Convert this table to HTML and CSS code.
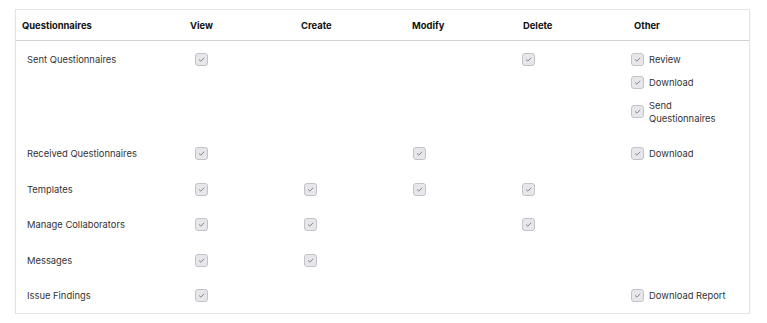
FILE: index.html
```html
<!DOCTYPE html>
<html>
<head>
<meta charset="utf-8">
<link rel="stylesheet" href="styles.css">
</head>
<body>
<div class="card">
  <div class="head">
    <div>Questionnaires</div><div>View</div><div>Create</div><div>Modify</div><div>Delete</div><div>Other</div>
  </div>
  <div class="row">
    <div class="name">Sent Questionnaires</div>
    <div><span class="cb"><svg viewBox="0 0 12 12"><path d="M3.6 6.2 L5.3 7.8 L8.6 4.4"/></svg></span></div>
    <div></div><div></div>
    <div><span class="cb"><svg viewBox="0 0 12 12"><path d="M3.6 6.2 L5.3 7.8 L8.6 4.4"/></svg></span></div>
    <div class="other">
      <div class="opt"><span class="cb"><svg viewBox="0 0 12 12"><path d="M3.6 6.2 L5.3 7.8 L8.6 4.4"/></svg></span><span>Review</span></div>
      <div class="opt"><span class="cb"><svg viewBox="0 0 12 12"><path d="M3.6 6.2 L5.3 7.8 L8.6 4.4"/></svg></span><span>Download</span></div>
      <div class="opt"><span class="cb"><svg viewBox="0 0 12 12"><path d="M3.6 6.2 L5.3 7.8 L8.6 4.4"/></svg></span><span>Send<br>Questionnaires</span></div>
    </div>
  </div>
  <div class="row">
    <div class="name">Received Questionnaires</div>
    <div><span class="cb"><svg viewBox="0 0 12 12"><path d="M3.6 6.2 L5.3 7.8 L8.6 4.4"/></svg></span></div>
    <div></div>
    <div><span class="cb"><svg viewBox="0 0 12 12"><path d="M3.6 6.2 L5.3 7.8 L8.6 4.4"/></svg></span></div>
    <div></div>
    <div class="other">
      <div class="opt"><span class="cb"><svg viewBox="0 0 12 12"><path d="M3.6 6.2 L5.3 7.8 L8.6 4.4"/></svg></span><span>Download</span></div>
    </div>
  </div>
  <div class="row">
    <div class="name">Templates</div>
    <div><span class="cb"><svg viewBox="0 0 12 12"><path d="M3.6 6.2 L5.3 7.8 L8.6 4.4"/></svg></span></div>
    <div><span class="cb"><svg viewBox="0 0 12 12"><path d="M3.6 6.2 L5.3 7.8 L8.6 4.4"/></svg></span></div>
    <div><span class="cb"><svg viewBox="0 0 12 12"><path d="M3.6 6.2 L5.3 7.8 L8.6 4.4"/></svg></span></div>
    <div><span class="cb"><svg viewBox="0 0 12 12"><path d="M3.6 6.2 L5.3 7.8 L8.6 4.4"/></svg></span></div>
    <div></div>
  </div>
  <div class="row">
    <div class="name">Manage Collaborators</div>
    <div><span class="cb"><svg viewBox="0 0 12 12"><path d="M3.6 6.2 L5.3 7.8 L8.6 4.4"/></svg></span></div>
    <div><span class="cb"><svg viewBox="0 0 12 12"><path d="M3.6 6.2 L5.3 7.8 L8.6 4.4"/></svg></span></div>
    <div></div>
    <div><span class="cb"><svg viewBox="0 0 12 12"><path d="M3.6 6.2 L5.3 7.8 L8.6 4.4"/></svg></span></div>
    <div></div>
  </div>
  <div class="row">
    <div class="name">Messages</div>
    <div><span class="cb"><svg viewBox="0 0 12 12"><path d="M3.6 6.2 L5.3 7.8 L8.6 4.4"/></svg></span></div>
    <div><span class="cb"><svg viewBox="0 0 12 12"><path d="M3.6 6.2 L5.3 7.8 L8.6 4.4"/></svg></span></div>
    <div></div><div></div><div></div>
  </div>
  <div class="row">
    <div class="name">Issue Findings</div>
    <div><span class="cb"><svg viewBox="0 0 12 12"><path d="M3.6 6.2 L5.3 7.8 L8.6 4.4"/></svg></span></div>
    <div></div><div></div><div></div>
    <div class="other">
      <div class="opt"><span class="cb"><svg viewBox="0 0 12 12"><path d="M3.6 6.2 L5.3 7.8 L8.6 4.4"/></svg></span><span>Download Report</span></div>
    </div>
  </div>
</div>
</body>
</html>
```
FILE: styles.css
```css
html, body { margin: 0; background: #fff; }
body {
  padding: 9px 17px 0 15px;
  font-family: Inter, "Noto Sans", sans-serif;
  font-size: 9.4px;
  color: #333;
}
.card {
  border: 1px solid #e3e3e6;
  background: #fff;
  box-shadow: 0 2px 3px rgba(0,0,0,0.03);
}
.head {
  display: grid;
  grid-template-columns: 168px 111px 111px 111px 111px 1fr;
  padding-left: 6px;
  height: 30px;
  align-items: center;
  border-bottom: 1px solid #d2d2d6;
  font-weight: 700;
  color: #111;
}
.row {
  display: grid;
  grid-template-columns: 168px 109px 109px 109px 109px 1fr;
  padding: 11.5px 0 11px 11px;
  line-height: 13px;
  align-items: start;
}
.row > div { min-height: 13px; display: flex; align-items: center; }
.other { flex-direction: column; align-items: flex-start !important; gap: 10px; }
.opt { display: flex; align-items: center; gap: 5px; }
.cb {
  display: inline-flex;
  align-items: center;
  justify-content: center;
  width: 13px;
  height: 13px;
  box-sizing: border-box;
  border: 1px solid #c2c2c8;
  border-radius: 3px;
  background: #e6e6eb;
  flex: none;
}
.cb svg { width: 11px; height: 11px; }
.cb path { fill: none; stroke: #7c7c84; stroke-width: 1; stroke-linecap: round; stroke-linejoin: round; }
```
